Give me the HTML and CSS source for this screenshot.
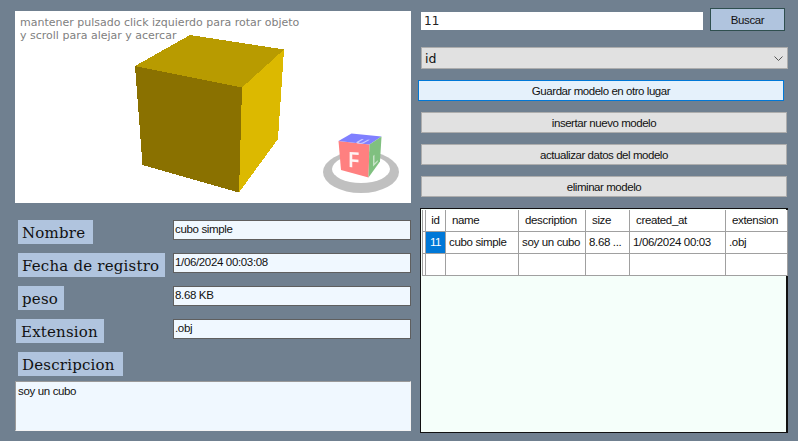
FILE: index.html
```html
<!DOCTYPE html>
<html lang="es">
<head>
<meta charset="utf-8">
<title>Modelos</title>
<link rel="stylesheet" href="styles.css">
</head>
<body>
<div class="app">
  <section class="left">
    <div class="viewer">
      <svg class="scene" viewBox="0 0 396 192" width="396" height="192" aria-hidden="true">
        <g transform="translate(-15 -11)">
          <g class="cube">
            <polygon fill="#b89b00" points="135,66 190,35 284,49.5 242,87.5"/>
            <polygon fill="#8a7100" points="135,66 242,87.5 239,192.5 142.5,165"/>
            <polygon fill="#dcb900" points="242,87.5 284,49.5 278,139 239,192.5"/>
          </g>
          <ellipse cx="361" cy="172" rx="38" ry="21" fill="#c0c0c0"/>
          <ellipse cx="361" cy="169" rx="29" ry="14" fill="#fff"/>
          <g class="gizmo">
            <polygon fill="#ff8080" points="338.5,141 369.5,144.5 368.5,177.5 341,170"/>
            <polygon fill="#8080ff" points="338.5,141 351.5,133.5 381.5,136.5 369.5,144.5"/>
            <polygon fill="#80c080" points="369.5,144.5 381.5,136.5 380,161.5 368.5,177.5"/>
            <text class="g-f" transform="matrix(.8 .06 0 1 348.5 167)">F</text>
            <text class="g-l" transform="matrix(.6 -.6 0 1 372.5 167)">L</text>
            <text class="g-u" transform="matrix(1 .1 -.8 .45 354 143)">U</text>
          </g>
        </g>
      </svg>
      <p class="hint">mantener pulsado click izquierdo para rotar objeto<br>y scroll para alejar y acercar</p>
    </div>
    <form class="details">
      <label class="tag tag-pad">Nombre</label><div class="field">cubo simple</div>
      <label class="tag">Fecha de registro</label><div class="field">1/06/2024 00:03:08</div>
      <label class="tag">peso</label><div class="field">8.68 KB</div>
      <label class="tag tag-out">Extension</label><div class="field">.obj</div>
      <label class="tag tag-wide tag-pad">Descripcion</label>
    </form>
    <div class="memo">soy un cubo</div>
  </section>
  <section class="right">
    <div class="search">
      <div class="search-box">11</div>
      <button class="btn-search" type="button">Buscar</button>
    </div>
    <div class="combo"><span>id</span>
      <svg width="9" height="5" viewBox="0 0 9 5" aria-hidden="true"><path d="M.5.5l4 4 4-4" fill="none" stroke="#555"/></svg>
    </div>
    <div class="actions">
      <button class="act act-focus" type="button">Guardar modelo en otro lugar</button>
      <button class="act" type="button">insertar nuevo modelo</button>
      <button class="act" type="button">actualizar datos del modelo</button>
      <button class="act" type="button">eliminar modelo</button>
    </div>
    <div class="grid-box">
      <table class="grid">
        <colgroup><col class="c0"><col class="c1"><col class="c2"><col class="c3"><col class="c4"><col class="c5"><col class="c6"></colgroup>
        <thead><tr><th></th><th class="ctr">id</th><th>name</th><th>description</th><th>size</th><th>created_at</th><th>extension</th></tr></thead>
        <tbody>
          <tr><td></td><td class="sel">11</td><td>cubo simple</td><td>soy un cubo</td><td>8.68 ...</td><td>1/06/2024 00:03</td><td>.obj</td></tr>
          <tr><td></td><td></td><td></td><td></td><td></td><td></td><td></td></tr>
        </tbody>
      </table>
    </div>
  </section>
</div>
</body>
</html>
```
FILE: styles.css
```css
* { box-sizing: border-box; }
html, body { margin: 0; height: 100%; }
body { background: #708090; overflow: hidden; font-family: "Liberation Sans", Arial, sans-serif; color: #111; }
.app { display: flex; gap: 7px; width: 798px; height: 441px; padding: 8px 0 0 15px; }

.left { width: 396px; padding-top: 3px; display: flex; flex-direction: column; }
.viewer { position: relative; width: 396px; height: 192px; background: #fff; flex: none; }
.scene { display: block; }
.cube { shape-rendering: crispEdges; }
.gizmo { filter: blur(.35px); }
.hint { position: absolute; left: 5px; top: 5px; margin: 0; font: 11px/13px "DejaVu Sans", Verdana, sans-serif; color: #808080; }
.g-f { font: bold 22px "Liberation Sans", sans-serif; fill: #fff; fill-opacity: .9; }
.g-l { font: bold 15px "Liberation Sans", sans-serif; fill: #fff; fill-opacity: .6; }
.g-u { font: bold 13px "Liberation Sans", sans-serif; fill: #fff; fill-opacity: .6; }

.details { display: grid; grid-template-columns: 158px 238px; row-gap: 9px; margin-top: 17px; align-items: start; }
.tag { justify-self: start; height: 24px; margin-left: 3px; padding: 2px 6px 0 4px; background: #b0c4de; font: 15px/23px "DejaVu Serif", serif; letter-spacing: .2px; color: #111; white-space: nowrap; }
.tag-pad { padding-right: 8px; }
.tag-out { margin-left: 1px; padding-left: 5px; }
.tag-wide { grid-column: 1 / -1; }
.field { height: 20px; background: #f0f8ff; border: 1px solid #5f5f5f; font-size: 11.5px; letter-spacing: -.35px; line-height: 14px; padding: 1px; color: #111; }
.memo { height: 50px; margin-top: 5px; background: #f0f8ff; border: 1px solid; border-color: #9a9a9a #f4f4f4 #f4f4f4 #9a9a9a; font-size: 11.5px; letter-spacing: -.35px; line-height: 13px; padding: 3px 2px; color: #111; }

.right { width: 372px; display: flex; flex-direction: column; }
.search { display: flex; align-items: flex-start; margin-left: 3px; }
.search-box { width: 282px; height: 18px; margin-top: 4px; background: #fff; font: 12px/18px "DejaVu Sans", sans-serif; padding-left: 3px; color: #222; }
.btn-search { width: 75px; height: 23px; margin-left: 7px; background: #b0c4de; border: 1px solid #2f4f4f; font: 11.5px "Liberation Sans", sans-serif; letter-spacing: -.4px; color: #111; padding: 0; }
.combo { display: flex; justify-content: space-between; align-items: center; width: 367px; height: 22px; margin: 16px 0 0 3px; padding: 0 4px 0 3px; background: #e1e1e1; border: 1px solid #adadad; font: 12.5px "DejaVu Sans", sans-serif; color: #111; }
.actions { display: flex; flex-direction: column; gap: 11px; margin-top: 11px; }
.act { width: 366px; height: 21px; margin-left: 3px; padding: 0; background: #e1e1e1; border: 1px solid #adadad; font: 11.5px "Liberation Sans", sans-serif; letter-spacing: -.45px; color: #111; }
.act-focus { margin-left: 0; background: #e5f1fb; border-color: #0078d7; }
.grid-box { width: 368px; height: 225px; margin: 11px 0 0 2px; padding: 1px 0 0 1px; background: #f5fffa; border: 1px solid #111; border-width: 1px 2px 1px 1px; }
.grid { border-collapse: collapse; table-layout: fixed; width: 365px; background: #fff; font-size: 11.5px; letter-spacing: -.35px; }
.grid th, .grid td { border: 1px solid #a0a0a0; padding: 0 3px; height: 22px; font-weight: 400; text-align: left; white-space: nowrap; overflow: hidden; }
.grid th { height: 21px; border-top: 0; padding-left: 6px; }
.grid .ctr { text-align: center; padding: 0; }
.grid .sel { background: #0078d7; color: #fff; text-align: center; padding: 0; }
.c0 { width: 3px; } .c1 { width: 20px; } .c2 { width: 73px; } .c3 { width: 67px; } .c4 { width: 44px; } .c5 { width: 96px; } .c6 { width: 62px; }
```
